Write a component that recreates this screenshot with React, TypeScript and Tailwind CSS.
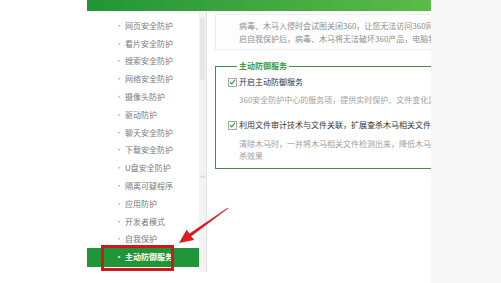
import React from "react";

const menu = [
  "网页安全防护",
  "看片安全防护",
  "搜索安全防护",
  "网络安全防护",
  "摄像头防护",
  "驱动防护",
  "聊天安全防护",
  "下载安全防护",
  "U盘安全防护",
  "隔离可疑程序",
  "应用防护",
  "开发者模式",
  "自我保护",
  "主动防御服务",
];

function Check() {
  return (
    <span className="w-[9px] h-[9px] border border-[#a9a9a9] bg-white flex items-center justify-center shrink-0">
      <svg width="8" height="8" viewBox="0 0 8 8">
        <path d="M1.2 4.2 L3.2 6.2 L6.8 1.4" fill="none" stroke="#2f8f3a" strokeWidth="1.3" />
      </svg>
    </span>
  );
}

export default function App() {
  return (
    <div
      className="w-[501px] h-[283px] bg-white flex relative overflow-hidden"
      style={{ fontFamily: '"Noto Sans CJK SC", "Noto Sans", sans-serif' }}
    >
      <div className="w-[87px] shrink-0" />

      <div className="w-[344px] h-[272px] flex flex-col shrink-0">
        <div className="h-[11px] bg-gradient-to-r from-[#1f9535] to-[#5abb48]" />

        <div className="flex flex-1 min-h-0">
          {/* sidebar */}
          <div className="w-[112px] pt-[6px] flex flex-col">
            {menu.map((m, i) => {
              const active = i === menu.length - 1;
              return (
                <div
                  key={m}
                  className={
                    active
                      ? "h-[19px] mt-[-0.5px] flex items-center bg-[#1f9537] text-white font-bold"
                      : "h-[17.8px] flex items-center text-[#7a7a7a]"
                  }
                >
                  <span className={active ? "w-[38px] pl-[28px] text-[8px] text-[#d8f0d8]" : "w-[38px] pl-[28px] text-[8px] text-[#b0b0b0]"}>
                    ·
                  </span>
                  <span className="text-[8px] leading-none">{m}</span>
                </div>
              );
            })}
          </div>

          {/* scrollbar */}
          <div className="w-[8px] bg-[#f3f3f3] border-r border-[#e2e2e2] flex flex-col items-center pt-[7px]">
            <div className="w-[5px] h-[62px] bg-[#e6e6e6] rounded-[2px]" />
            <div className="mt-[93px] text-[6px] leading-none text-[#c2c2c2]">≡</div>
          </div>

          {/* content */}
          <div className="flex-1 overflow-hidden pl-[8px] pt-[3px]">
            <div className="w-[260px] h-[36px] border border-[#ececec] bg-[#fdfdfd] pl-[23px] pt-[4px] text-[8px] leading-[13px] text-[#8e8e8e] whitespace-nowrap">
              <div>病毒、木马入侵时会试图关闭360，让您无法访问360网站</div>
              <div>启自我保护后，病毒、木马将无法破坏360产品，电脑将</div>
            </div>

            <fieldset className="w-[260px] h-[108px] mt-[11px] border-[1.5px] border-[#3f8d4e] pl-[12px] pt-[6px]">
              <legend className="ml-[9px] px-[2px] text-[8px] leading-[10px] font-bold text-[#3f9a3f]">
                主动防御服务
              </legend>
              <div className="flex items-center gap-[2px] whitespace-nowrap">
                <Check />
                <span className="text-[8px] leading-[10px] text-[#333]">开启主动防御服务</span>
              </div>
              <div className="pl-[11px] mt-[7px] text-[8px] leading-[12px] text-[#a0a0a0] whitespace-nowrap">
                360安全防护中心的服务项，提供实时保护、文件变化监控
              </div>
              <div className="flex items-center gap-[2px] mt-[14px] whitespace-nowrap">
                <Check />
                <span className="text-[8px] leading-[10px] text-[#333]">
                  利用文件审计技术与文件关联，扩展查杀木马相关文件
                </span>
              </div>
              <div className="pl-[11px] mt-[8px] text-[8px] leading-[12px] text-[#a0a0a0] whitespace-nowrap">
                <div>清除木马时，一并将木马相关文件检测出来，降低木马重</div>
                <div>杀效果</div>
              </div>
            </fieldset>
          </div>
        </div>
      </div>

      <div className="flex-1 h-full bg-[#f7f7f7]" />

      {/* annotation box */}
      <div className="absolute left-[101px] top-[245px] w-[73px] h-[26px] border-[3px] border-[#d4161b]" />

      {/* annotation arrow */}
      <svg className="absolute left-0 top-0" width="501" height="283" viewBox="0 0 501 283">
        <polygon
          points="228.4,208.3 191.3,236.3 194.2,240.1 179,243 186.6,229.8 189.5,233.6 227.7,207.7"
          fill="#d81e1e"
        />
      </svg>
    </div>
  );
}
